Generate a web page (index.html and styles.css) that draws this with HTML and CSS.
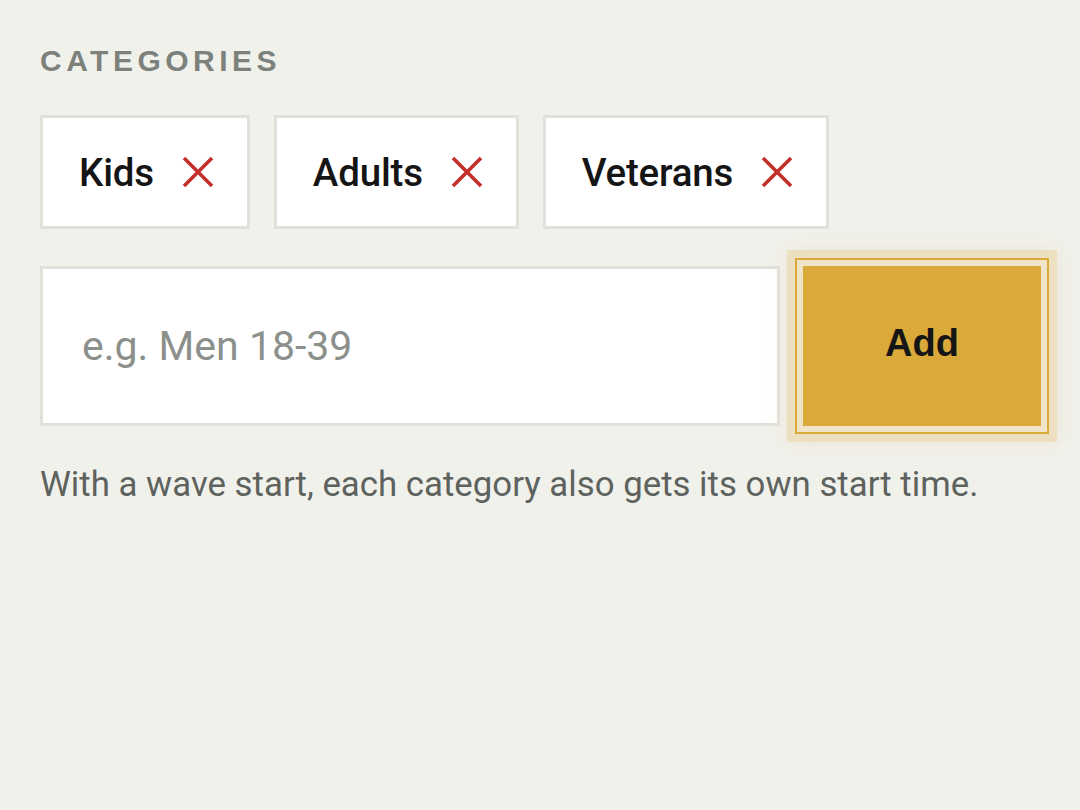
FILE: index.html
```html
<!DOCTYPE html>
<html lang="en">
<head>
<meta charset="utf-8">
<title>Categories</title>
<link rel="stylesheet" href="styles.css">
</head>
<body>
<section class="categories">
  <h2 class="label">Categories</h2>
  <ul class="tags">
    <li class="tag"><span class="tag-name">Kids</span><button class="tag-remove" aria-label="Remove Kids"><svg viewBox="0 0 32 32" width="32" height="32"><path d="M2 2L30 30M30 2L2 30" stroke="currentColor" stroke-width="3.6" fill="none"/></svg></button></li>
    <li class="tag"><span class="tag-name">Adults</span><button class="tag-remove" aria-label="Remove Adults"><svg viewBox="0 0 32 32" width="32" height="32"><path d="M2 2L30 30M30 2L2 30" stroke="currentColor" stroke-width="3.6" fill="none"/></svg></button></li>
    <li class="tag"><span class="tag-name">Veterans</span><button class="tag-remove" aria-label="Remove Veterans"><svg viewBox="0 0 32 32" width="32" height="32"><path d="M2 2L30 30M30 2L2 30" stroke="currentColor" stroke-width="3.6" fill="none"/></svg></button></li>
  </ul>
  <div class="add-row">
    <input class="add-input" type="text" placeholder="e.g. Men 18-39">
    <button class="add-btn">Add</button>
  </div>
  <p class="hint">With a wave start, each category also gets its own start time.</p>
</section>
</body>
</html>
```
FILE: styles.css
```css
html, body {
  margin: 0;
  padding: 0;
  background: #f1f1ec;
}
body {
  font-family: Roboto, "Liberation Sans", sans-serif;
  color: #151515;
}
.categories {
  padding: 44px 38px 0 40px;
}
.label {
  margin: 0;
  font-family: "Liberation Sans", Arial, sans-serif;
  font-weight: 700;
  font-size: 30px;
  line-height: 34px;
  letter-spacing: 4.5px;
  text-transform: uppercase;
  color: #7d817c;
}
.tags {
  list-style: none;
  margin: 37px 0 0 0;
  padding: 0;
  display: flex;
  gap: 24px;
}
.tag {
  box-sizing: border-box;
  height: 114px;
  display: flex;
  align-items: center;
  gap: 28px;
  padding: 0 33px 0 36px;
  background: #fff;
  border: 3px solid #e1e1dc;
}
.tag-name {
  font-size: 38.5px;
  font-weight: 500;
  color: #151515;
  letter-spacing: -0.2px;
}
.tag-remove {
  display: flex;
  padding: 0;
  margin: 0;
  border: 0;
  background: none;
  color: #c3302c;
}
.add-row {
  display: flex;
  gap: 23px;
  margin-top: 37px;
}
.add-input {
  flex: none;
  box-sizing: border-box;
  width: 740px;
  height: 160px;
  margin: 0;
  padding: 0 39px;
  border: 3px solid #e1e1dc;
  background: #fff;
  font-family: Roboto, sans-serif;
  font-size: 41px;
  color: #151515;
  outline: none;
}
.add-input::placeholder {
  color: #8c908c;
}
.add-btn {
  flex: none;
  box-sizing: border-box;
  width: 238px;
  height: 160px;
  margin: 0;
  border: 0;
  background: #d9a93a;
  font-family: "Liberation Sans", Arial, sans-serif;
  font-weight: 700;
  font-size: 38px;
  color: #151515;
  padding: 0 0 6px 0;
  box-shadow: 0 0 0 6px #efe4c7, 0 0 0 8px #d9a93a, 0 0 0 16px #ede0c0, 0 0 20px 16px rgba(230, 210, 160, 0.35);
}
.hint {
  margin: 38px 0 0 0;
  font-size: 34.8px;
  line-height: 40px;
  color: #5e625e;
}
```
